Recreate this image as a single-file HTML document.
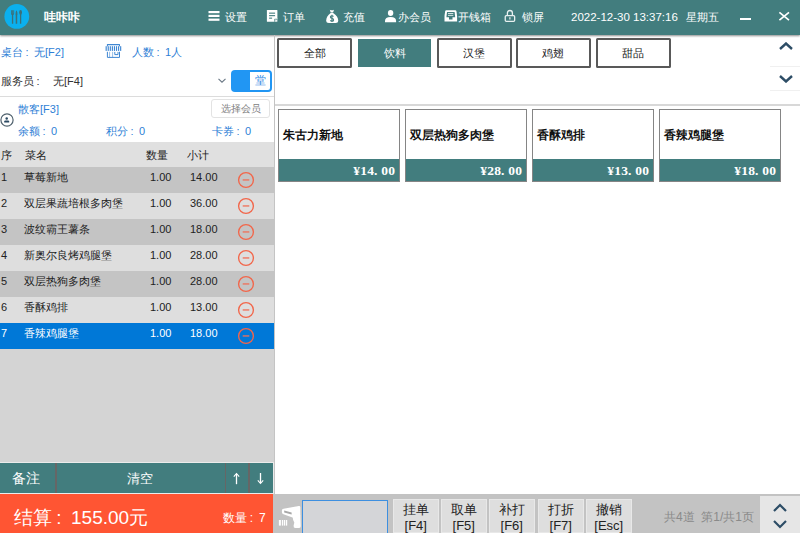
<!DOCTYPE html>
<html><head><meta charset="utf-8">
<style>
*{box-sizing:border-box;margin:0;padding:0}
html,body{width:800px;height:533px;overflow:hidden;background:#fff;font-family:"Liberation Sans",sans-serif;font-size:12px;color:#222}
.a{position:absolute;white-space:nowrap}
.hd{left:0;top:0;width:800px;height:35px;background:#427d7e;box-shadow:0 1px 2px rgba(0,0,0,.45)}
.ht{color:#fff;font-size:11px;line-height:14px;top:10px}
.blue{color:#2f7fd6}
.c{display:inline-block;width:1em;padding-left:.22em;text-align:left}
.cat{top:38px;height:30px;width:75.2px;border:2px solid #595959;border-radius:1.5px;background:#fff;font-size:11px;line-height:27px;text-align:center;color:#222}
.card{top:109px;width:122px;height:73px;border:1px solid #858585;background:#fff}
.card .nm{position:absolute;left:3.5px;top:16.5px;font-weight:bold;font-size:12.3px;line-height:16px;color:#111}
.card .pr{position:absolute;left:0;right:0;bottom:0;height:22px;background:#427d7e;color:#fff;text-align:right;padding-right:4px;font-family:"Liberation Serif",serif;font-weight:bold;font-size:13.5px;line-height:23.5px}
.pr b{display:inline-block;width:7px;text-align:center;font-weight:bold}.pr b.d{text-align:left}
.row{left:0;width:274px;height:26px}
.row span{position:absolute;top:2.5px;line-height:14px;font-size:11px;font-weight:500}
.minus{position:absolute;left:238px;top:5px;width:16px;height:16px;border:1.3px solid #f2664a;border-radius:50%}
.minus:after{content:"";position:absolute;left:3.7px;top:6px;width:6.6px;height:1.3px;background:#f07058}
.fb{top:499px;width:45.5px;height:34px;background:#dedede;border:1px solid #e8e8e8;text-align:center;font-size:13px;line-height:15.5px;padding-top:2px;color:#222}
</style></head><body>
<!-- header -->
<div class="a hd"></div>
<svg class="a" style="left:0;top:0" width="35" height="35" viewBox="0 0 35 35">
  <circle cx="16.8" cy="16.4" r="12.4" fill="#0bb0ee"/>
  <g fill="#3b7079">
    <rect x="11" y="10.2" width="0.8" height="3.2"/><rect x="12.15" y="10.2" width="0.8" height="3.2"/><rect x="13.3" y="10.2" width="0.8" height="3.2"/>
    <path d="M11 13.2h3.1v0.6q0 .9-.9 1.1v8.8h-1.3v-8.8q-.9-.2-.9-1.1z"/>
    <path d="M16.5 10.3q1 1.2 1 4.2l-.3 .9v8.3h-1.5v-8.3l-.2-.9q0-3 1-4.2z"/>
    <ellipse cx="20.6" cy="12.4" rx="1.4" ry="2.3"/><rect x="19.95" y="14" width="1.3" height="9.7"/>
  </g>
</svg>
<div class="a ht" style="left:43.5px;top:10px;font-weight:bold;font-size:12.2px;line-height:15px">哇咔咔</div>
<!-- menu -->
<svg class="a" style="left:208px;top:11px" width="12" height="10" viewBox="0 0 12 10"><g fill="#fff"><rect x="0.5" y="0" width="11" height="2.2"/><rect x="0.5" y="3.8" width="11" height="2.2"/><rect x="0.5" y="7.6" width="11" height="2.2"/></g></svg>
<div class="a ht" style="left:225px">设置</div>
<svg class="a" style="left:266px;top:9px" width="13" height="14" viewBox="0 0 13 14"><path d="M1.4 1.1H10.9Q11.4 1.1 11.4 1.6V9.3L8.3 12.8H1.4Q.9 12.8 .9 12.3V1.6Q.9 1.1 1.4 1.1Z" fill="#fff"/><g fill="#427d7e"><rect x="3.1" y="3.6" width="6" height="1.1"/><rect x="3.1" y="6.1" width="6" height="1.1"/><rect x="3.1" y="8.6" width="3" height="1.1"/></g><path d="M9.6 10.9L11.4 9.3V12.3Q11.4 12.8 10.9 12.8H8.3Z" fill="#fff" opacity=".9"/><path d="M8.6 12.6L8.6 10.2L11.2 10.2" fill="none" stroke="#427d7e" stroke-width=".7"/></svg>
<div class="a ht" style="left:283px">订单</div>
<svg class="a" style="left:320px;top:6px" width="24" height="20" viewBox="0 0 24 20"><path d="M9.8 3.8Q11.9 4.9 14 3.8L13.1 6.6H10.7Z" fill="#fff"/><path d="M10.7 6.9H13.1Q18.2 10 18.2 14.4Q18.2 16.9 15.6 16.9H8.8Q6.2 16.9 6.2 14.4Q6.2 10 10.7 6.9Z" fill="#fff"/><path d="M13.5 10.6Q13 9.7 11.9 9.7Q10.4 9.7 10.4 11Q10.4 12.1 11.9 12.4Q13.6 12.7 13.6 13.9Q13.6 15.2 11.9 15.2Q10.9 15.2 10.3 14.4M11.95 8.8V16" fill="none" stroke="#427d7e" stroke-width="1.1"/></svg>
<div class="a ht" style="left:343px">充值</div>
<svg class="a" style="left:384px;top:9px" width="13" height="14" viewBox="0 0 13 14"><ellipse cx="6.6" cy="4" rx="2.7" ry="2.95" fill="#fff"/><path d="M1 13.3V12Q1 7.9 6.55 7.9Q12.1 7.9 12.1 12V13.3Z" fill="#fff"/></svg>
<div class="a ht" style="left:398px">办会员</div>
<svg class="a" style="left:443px;top:9px" width="16" height="14" viewBox="0 0 16 14"><path d="M3.2 1.3H12.4Q13.1 1.3 13.4 2L14.1 7V12.4H1.5V7L2.2 2Q2.5 1.3 3.2 1.3Z" fill="#fff"/><path d="M4 3H11.6L12.2 8.25H9.5V10.4Q9.5 10.6 9.3 10.6H6.2Q6 10.6 6 10.4V8.25H3.4Z" fill="#427d7e"/><g fill="#fff" opacity=".85"><rect x="5" y="4.1" width="5.3" height=".9"/><rect x="5" y="5.9" width="5.3" height=".9"/></g></svg>
<div class="a ht" style="left:458px">开钱箱</div>
<svg class="a" style="left:504px;top:9px" width="12" height="14" viewBox="0 0 12 14"><path d="M3.4 6.3V4Q3.4 1.5 5.9 1.5Q8.4 1.5 8.4 4V6.3" fill="none" stroke="#e8f0f0" stroke-width="1.3"/><rect x="1.25" y="6.7" width="9.4" height="5.6" rx="1" fill="none" stroke="#e8f0f0" stroke-width="1.3"/><rect x="5.3" y="8.2" width="1.2" height="2.3" fill="#e8f0f0"/></svg>
<div class="a ht" style="left:522px">锁屏</div>
<div class="a ht" style="left:571px;font-size:11.5px">2022-12-30 13:37:16</div>
<div class="a ht" style="left:686px">星期五</div>
<div class="a" style="left:740px;top:18px;width:11px;height:1.6px;background:#fff"></div>
<svg class="a" style="left:778px;top:11px" width="12" height="10" viewBox="0 0 12 10"><path d="M1.4 1.4L11 9.1M11 1.4L1.4 9.1" stroke="#fff" stroke-width="1.7"/></svg>

<!-- left panel -->
<div class="a blue" style="left:1px;top:45px;font-size:11px;line-height:14px">桌台<i class="c" style="font-style:normal">:</i>无[F2]</div>
<svg class="a" style="left:104px;top:42px" width="20" height="18" viewBox="0 0 20 18"><g fill="#3f87d3"><rect x="2.9" y="2" width="13.1" height="1.2" rx=".5"/><rect x="2.9" y="3" width="1" height="1.3"/><rect x="15" y="3" width="1" height="1.3"/><rect x="1.60" y="4.2" width="1.15" height="4.7"/><rect x="3.67" y="4.2" width="1.15" height="4.7"/><rect x="5.74" y="4.2" width="1.15" height="4.7"/><rect x="7.81" y="4.2" width="1.15" height="4.7"/><rect x="9.88" y="4.2" width="1.15" height="4.7"/><rect x="11.95" y="4.2" width="1.15" height="4.7"/><rect x="14.02" y="4.2" width="1.15" height="4.7"/><rect x="16.09" y="4.2" width="1.15" height="4.7"/></g><g fill="none" stroke="#3f87d3" stroke-width="1"><path d="M3.4 9.8V15.4H15.5V9.8"/><path d="M5.6 9.8V15.4M8.6 9.8V15.4" stroke-opacity=".55"/><path d="M10.8 9.9V12.6H14V9.9"/></g></svg>
<div class="a blue" style="left:132px;top:45px;font-size:11px;line-height:14px">人数<i class="c" style="font-style:normal">:</i>1人</div>
<div class="a" style="left:1px;top:74px;font-size:11px;line-height:14px;color:#333">服务员<i class="c" style="font-style:normal">:</i></div>
<div class="a" style="left:53px;top:74px;font-size:11px;line-height:14px;color:#333">无[F4]</div>
<svg class="a" style="left:218px;top:78px" width="8" height="5" viewBox="0 0 8 5"><path d="M0.5 0.8l3.5 3.4 3.5-3.4" fill="none" stroke="#6a7885" stroke-width="1.1"/></svg>
<div class="a" style="left:231px;top:70px;width:41px;height:22px;border-radius:4px;background:#2196f3"><div style="position:absolute;left:19px;top:2px;width:20px;height:18px;background:#fff;border-radius:0 2px 2px 0"></div><div style="position:absolute;left:19px;top:4px;width:20px;text-align:center;font-size:10.5px;line-height:13px;color:#2b87e3">堂</div></div>
<div class="a" style="left:0;top:96px;width:274px;height:1px;background:#dcdcdc"></div>
<svg class="a" style="left:0;top:110px" width="16" height="20" viewBox="0 0 16 20"><circle cx="7" cy="10" r="6.1" fill="none" stroke="#4f616d" stroke-width="1.2"/><circle cx="6.7" cy="8.4" r="1.25" fill="#2c4a63"/><path d="M4.2 12.6V11.6Q4.2 10.6 5.4 10.6H8Q9.2 10.6 9.2 11.6V12.6Z" fill="#2c4a63"/></svg>
<div class="a blue" style="left:18px;top:102px;font-size:11px;line-height:14px">散客[F3]</div>
<div class="a" style="left:211px;top:99px;width:59px;height:19px;border:1px solid #e3e3e3;border-radius:3px;font-size:10px;line-height:17px;text-align:center;color:#808080">选择会员</div>
<div class="a blue" style="left:18px;top:124px;font-size:11px;line-height:14px">余额<i class="c" style="font-style:normal">:</i>0</div>
<div class="a blue" style="left:106px;top:124px;font-size:11px;line-height:14px">积分<i class="c" style="font-style:normal">:</i>0</div>
<div class="a blue" style="left:212px;top:124px;font-size:11px;line-height:14px">卡券<i class="c" style="font-style:normal">:</i>0</div>

<div class="a" style="left:0;top:142px;width:274px;height:25px;background:#e0e0e0"></div>
<div class="a" style="left:1px;top:148px;font-size:11px;line-height:14px">序</div>
<div class="a" style="left:25px;top:148px;font-size:11px;line-height:14px">菜名</div>
<div class="a" style="left:146px;top:148px;font-size:11px;line-height:14px">数量</div>
<div class="a" style="left:187px;top:148px;font-size:11px;line-height:14px">小计</div>

<div class="a" style="left:0;top:167px;width:274px;height:296px;background:#d4d4d4"></div>
<div class="a row" style="top:167px;background:#c4c4c4"><span style="left:1px">1</span><span style="left:24px">草莓新地</span><span style="left:150px">1.00</span><span style="left:190px">14.00</span><svg style="position:absolute;left:237px;top:4px" width="18" height="18" viewBox="0 0 18 18"><circle cx="9" cy="9" r="7.4" fill="none" stroke="#f2664a" stroke-width="1.35"/><rect x="5.7" y="8.3" width="6.6" height="1.3" fill="#f07058"/></svg></div>
<div class="a row" style="top:193px;background:#dedede"><span style="left:1px">2</span><span style="left:24px">双层果蔬培根多肉堡</span><span style="left:150px">1.00</span><span style="left:190px">36.00</span><svg style="position:absolute;left:237px;top:4px" width="18" height="18" viewBox="0 0 18 18"><circle cx="9" cy="9" r="7.4" fill="none" stroke="#f2664a" stroke-width="1.35"/><rect x="5.7" y="8.3" width="6.6" height="1.3" fill="#f07058"/></svg></div>
<div class="a row" style="top:219px;background:#c4c4c4"><span style="left:1px">3</span><span style="left:24px">波纹霸王薯条</span><span style="left:150px">1.00</span><span style="left:190px">18.00</span><svg style="position:absolute;left:237px;top:4px" width="18" height="18" viewBox="0 0 18 18"><circle cx="9" cy="9" r="7.4" fill="none" stroke="#f2664a" stroke-width="1.35"/><rect x="5.7" y="8.3" width="6.6" height="1.3" fill="#f07058"/></svg></div>
<div class="a row" style="top:245px;background:#dedede"><span style="left:1px">4</span><span style="left:24px">新奥尔良烤鸡腿堡</span><span style="left:150px">1.00</span><span style="left:190px">28.00</span><svg style="position:absolute;left:237px;top:4px" width="18" height="18" viewBox="0 0 18 18"><circle cx="9" cy="9" r="7.4" fill="none" stroke="#f2664a" stroke-width="1.35"/><rect x="5.7" y="8.3" width="6.6" height="1.3" fill="#f07058"/></svg></div>
<div class="a row" style="top:271px;background:#c4c4c4"><span style="left:1px">5</span><span style="left:24px">双层热狗多肉堡</span><span style="left:150px">1.00</span><span style="left:190px">28.00</span><svg style="position:absolute;left:237px;top:4px" width="18" height="18" viewBox="0 0 18 18"><circle cx="9" cy="9" r="7.4" fill="none" stroke="#f2664a" stroke-width="1.35"/><rect x="5.7" y="8.3" width="6.6" height="1.3" fill="#f07058"/></svg></div>
<div class="a row" style="top:297px;background:#dedede"><span style="left:1px">6</span><span style="left:24px">香酥鸡排</span><span style="left:150px">1.00</span><span style="left:190px">13.00</span><svg style="position:absolute;left:237px;top:4px" width="18" height="18" viewBox="0 0 18 18"><circle cx="9" cy="9" r="7.4" fill="none" stroke="#f2664a" stroke-width="1.35"/><rect x="5.7" y="8.3" width="6.6" height="1.3" fill="#f07058"/></svg></div>
<div class="a row" style="top:323px;background:#0078d7;color:#fff"><span style="left:1px">7</span><span style="left:24px">香辣鸡腿堡</span><span style="left:150px">1.00</span><span style="left:190px">18.00</span><svg style="position:absolute;left:237px;top:4px" width="18" height="18" viewBox="0 0 18 18"><circle cx="9" cy="9" r="7.4" fill="none" stroke="#f2664a" stroke-width="1.35"/><rect x="5.7" y="8.3" width="6.6" height="1.3" fill="#f07058"/></svg></div>

<!-- left bottom buttons -->
<div class="a" style="left:0;top:462px;width:274px;height:32px;background:#ebebeb"></div>
<div class="a" style="left:0;top:463px;width:272.5px;height:30px;background:#427d7e"></div>
<div class="a" style="left:55.3px;top:463px;width:1.4px;height:30px;background:#666"></div>
<div class="a" style="left:224.8px;top:463px;width:1.4px;height:30px;background:#666"></div>
<div class="a" style="left:248.4px;top:463px;width:1.4px;height:30px;background:#666"></div>
<div class="a" style="left:12px;top:470px;color:#fff;font-size:14px;line-height:17px">备注</div>
<div class="a" style="left:127px;top:471px;color:#fff;font-size:13px;line-height:15px">清空</div>
<svg class="a" style="left:232px;top:472px" width="9" height="13" viewBox="0 0 9 13"><path d="M4.5 1.8V12.2" stroke="#fff" stroke-width="1.3"/><path d="M1.8 4.6L4.5 1.5 7.2 4.6" fill="none" stroke="#fff" stroke-width="1.1"/></svg>
<svg class="a" style="left:256px;top:472px" width="9" height="13" viewBox="0 0 9 13"><path d="M4.5 1V11" stroke="#fff" stroke-width="1.3"/><path d="M1.8 8.4L4.5 11.5 7.2 8.4" fill="none" stroke="#fff" stroke-width="1.1"/></svg>
<div class="a" style="left:0;top:493.8px;width:273.5px;height:40px;background:#ff5533"></div>
<div class="a" style="left:14px;top:507px;color:#fff;font-size:19px;line-height:22px">结算<i class="c" style="font-style:normal">:</i>155.00元</div>
<div class="a" style="left:223px;top:511px;color:#fff;font-size:12px;line-height:14px">数量<i class="c" style="font-style:normal">:</i>7</div>

<div class="a" style="left:273.6px;top:35px;width:1.6px;height:459px;background:#c4c4c4"></div>

<!-- right panel -->
<div class="a cat" style="left:277.2px">全部</div>
<div class="a cat" style="left:357px;background:#427d7e;border-color:#fff;color:#fff;border-width:1px;border-radius:0;line-height:29px">饮料</div>
<div class="a cat" style="left:436.5px">汉堡</div>
<div class="a cat" style="left:515.6px">鸡翅</div>
<div class="a cat" style="left:595.6px">甜品</div>
<svg class="a" style="left:779px;top:42px" width="14" height="8" viewBox="0 0 14 8"><path d="M1 7l6-5.5 6 5.5" fill="none" stroke="#2d4d66" stroke-width="2.4"/></svg>
<div class="a" style="left:770px;top:66px;width:30px;height:1px;background:#f0f0f0"></div>
<svg class="a" style="left:779px;top:75px" width="14" height="8" viewBox="0 0 14 8"><path d="M1 1l6 5.5 6-5.5" fill="none" stroke="#2d4d66" stroke-width="2.4"/></svg>
<div class="a" style="left:770px;top:90px;width:30px;height:1px;background:#f0f0f0"></div>
<div class="a" style="left:275px;top:104px;width:525px;height:2px;background:#d8d8d8"></div>

<div class="a card" style="left:278px"><div class="nm">朱古力新地</div><div class="pr"><b>¥</b><b>1</b><b>4</b><b class="d">.</b><b>0</b><b>0</b></div></div>
<div class="a card" style="left:405px"><div class="nm">双层热狗多肉堡</div><div class="pr"><b>¥</b><b>2</b><b>8</b><b class="d">.</b><b>0</b><b>0</b></div></div>
<div class="a card" style="left:532px"><div class="nm">香酥鸡排</div><div class="pr"><b>¥</b><b>1</b><b>3</b><b class="d">.</b><b>0</b><b>0</b></div></div>
<div class="a card" style="left:659px"><div class="nm">香辣鸡腿堡</div><div class="pr"><b>¥</b><b>1</b><b>8</b><b class="d">.</b><b>0</b><b>0</b></div></div>

<!-- bottom bar -->
<div class="a" style="left:273px;top:494px;width:527px;height:39px;background:#c3c3c3"></div>
<svg class="a" style="left:274px;top:498px" width="30" height="35" viewBox="0 0 30 35"><g fill="#fff"><path d="M9.5 10.7L24.8 7.9Q26.3 7.7 26.3 9.2L26.4 17.6Q26.4 18.6 25.4 18.8L19.5 19.6Q18.6 19.7 17.8 19.2L9.4 16.3Q7.9 15.8 7.9 14.2V12.4Q7.9 11 9.5 10.7Z"/><path d="M18.6 18.8L26.4 17.5L26.7 28.2Q26.7 30.1 24.6 30.1L21.4 30.1Q19.3 30 19.6 27.8L20.3 24.4Q18.9 22.6 18.6 18.8Z"/><rect x="4.9" y="22" width="2" height="5.6"/><rect x="7.9" y="22" width="1.3" height="5.6"/><rect x="9.9" y="22" width="1.3" height="5.6"/><rect x="11.9" y="22" width="1.3" height="5.6"/></g><path d="M10.2 12.6L17.6 14.4L17.6 16.4L10.2 14.6Z" fill="#a8a8a8"/></svg>
<div class="a" style="left:302px;top:500px;width:86px;height:33px;background:#d4d5d8;border:1.5px solid #3d8fe0;border-bottom:none"></div>
<div class="a fb" style="left:393px">挂单<br>[F4]</div>
<div class="a fb" style="left:441px">取单<br>[F5]</div>
<div class="a fb" style="left:489px">补打<br>[F6]</div>
<div class="a fb" style="left:538px">打折<br>[F7]</div>
<div class="a fb" style="left:586px">撤销<br>[Esc]</div>
<div class="a" style="left:664px;top:510px;color:#8a8a8a;font-size:12px;line-height:14px">共4道&nbsp;&nbsp;第1/共1页</div>
<div class="a" style="left:760px;top:496px;width:40px;height:37px;background:#e6e6e6"></div>
<svg class="a" style="left:773px;top:503px" width="14" height="9" viewBox="0 0 14 9"><path d="M1 8l6-6 6 6" fill="none" stroke="#2d4d66" stroke-width="2.2"/></svg>
<svg class="a" style="left:773px;top:520px" width="14" height="9" viewBox="0 0 14 9"><path d="M1 1l6 6 6-6" fill="none" stroke="#2d4d66" stroke-width="2.2"/></svg>
</body></html>
